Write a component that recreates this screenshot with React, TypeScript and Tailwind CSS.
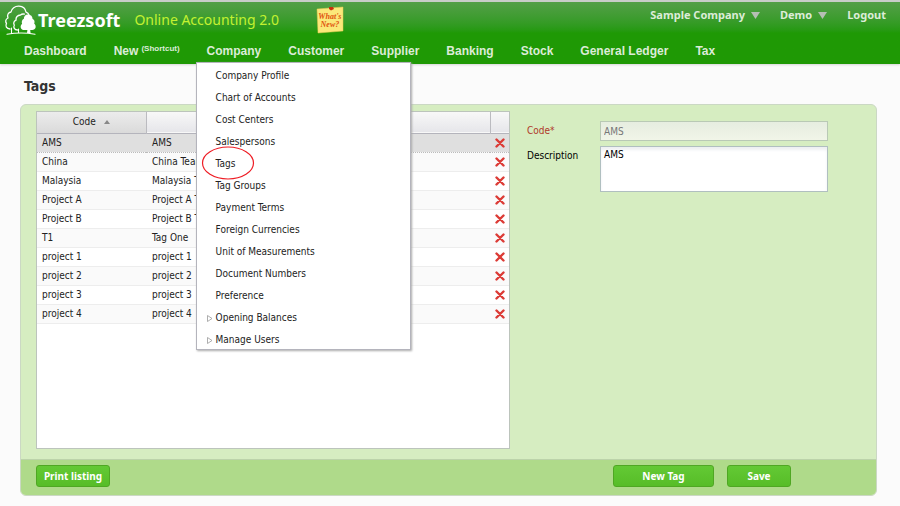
import { useState } from "react";

const navItems = [
  "Dashboard",
  "New",
  "Company",
  "Customer",
  "Supplier",
  "Banking",
  "Stock",
  "General Ledger",
  "Tax",
];

const companyMenu = [
  { label: "Company Profile" },
  { label: "Chart of Accounts" },
  { label: "Cost Centers" },
  { label: "Salespersons" },
  { label: "Tags", marked: true },
  { label: "Tag Groups" },
  { label: "Payment Terms" },
  { label: "Foreign Currencies" },
  { label: "Unit of Measurements" },
  { label: "Document Numbers" },
  { label: "Preference" },
  { label: "Opening Balances", hasChildren: true },
  { label: "Manage Users", hasChildren: true },
];

const initialTags = [
  { code: "AMS", description: "AMS" },
  { code: "China", description: "China Team" },
  { code: "Malaysia", description: "Malaysia Team" },
  { code: "Project A", description: "Project A Team" },
  { code: "Project B", description: "Project B Team" },
  { code: "T1", description: "Tag One" },
  { code: "project 1", description: "project 1" },
  { code: "project 2", description: "project 2" },
  { code: "project 3", description: "project 3" },
  { code: "project 4", description: "project 4" },
];

function TreeLogo() {
  return (
    <svg width="34" height="32" viewBox="4 3 34 32" fill="none" aria-hidden="true">
      <g stroke="#ffffff" strokeWidth="1.3" strokeLinecap="round" strokeLinejoin="round">
        {/* back tree */}
        <path d="M10 28c-3.500 0-5-3-3.500-5.500-1.500-2-.800-4.500 1.500-5.500-1.200-3 .300-5.500 3-6C11.500 7.500 15 5 19 5.200c4 .200 6.500 2.800 7 6 1.600.600 2.600 1.600 3 2.800" />
        {/* middle tree */}
        <path d="M17.500 29c-3 0-4.500-2.500-3.200-4.800-1.200-2-.400-4.200 1.700-5-.300-3 1.500-5 4.500-5.200 1-.900 2.500-1.200 4-.800" />
        <path d="M11.500 27v5M18.500 28v4M7 33.300c9-1.700 19-1.700 28 0" strokeWidth="1.100" />
      </g>
      {/* front tree */}
      <path
        d="M28 13.500c3 0 4.600 2.200 4.500 4.300 2 .900 2.500 3 1.700 4.700 2.600 2.500 1.700 6.500-2 6.500h-2l.400 3h-3.600l.400-3h-3c-3.800 0-5-3.800-2.300-6.300-.900-2 .100-4.200 1.800-4.900C23.700 15.500 25.300 13.500 28 13.500z"
        fill="#ffffff"
      />
    </svg>
  );
}

function WhatsNewNote() {
  return (
    <svg width="30" height="28" viewBox="0 0 30 28" aria-hidden="true">
      <path d="M2 3l26-2v24L3 27z" fill="#fbe87a" stroke="#e2c94d" strokeWidth="0.500" />
      <path d="M14 1l4 0 1 2-3 1.500-2-1.500z" fill="#c8310c" />
    </svg>
  );
}

function DeleteIcon() {
  return (
    <svg width="10" height="10" viewBox="0 0 10 10" aria-hidden="true">
      <path d="M1.500 1.500l7 7M8.500 1.500l-7 7" stroke="#dc3b36" strokeWidth="2.400" strokeLinecap="round" />
    </svg>
  );
}

function DownArrow() {
  return (
    <svg width="9" height="7" viewBox="0 0 9 7" aria-hidden="true">
      <path d="M0 0h9L4.500 7z" fill="#b5bfb3" />
    </svg>
  );
}

const greenButton =
  "h-[22px] rounded-[3px] border border-[#4fa723] bg-linear-to-b from-[#63c934] to-[#57bd28] font-['Noto_Sans',sans-serif] text-[10px] leading-4 font-bold text-white";

export default function App() {
  const [tags, setTags] = useState(initialTags);
  const [selected, setSelected] = useState("AMS");
  const [description, setDescription] = useState("AMS");

  const selectTag = (tag: { code: string; description: string }) => {
    setSelected(tag.code);
    setDescription(tag.description);
  };

  return (
    <div className="min-h-screen bg-[#fbfbfb] font-['DejaVu_Sans_Condensed','Noto_Sans',sans-serif] text-[10px] leading-4 text-[#222222]">
      {/* Header */}
      <header className="border-t-2 border-[#c9cdc9] bg-linear-to-b from-[#539f47] to-[#1f9905] to-50% font-['Noto_Sans',sans-serif] shadow-[0_1px_2px_#d5d5d5]">
        <div className="flex h-9 items-center justify-between pr-[14px] pl-1">
          <div className="flex items-center">
            <TreeLogo />
            <span className="text-[18px] font-bold text-white">Treezsoft</span>
            <span className="ml-[14px] text-[14px] text-[#c3f230]">Online Accounting 2.0</span>
            <a href="#whats-new" className="relative ml-9">
              <WhatsNewNote />
              <span className="absolute inset-x-0 top-[7px] text-center font-['Liberation_Serif',serif] text-[8px] leading-2 font-bold text-[#e0530e] italic">
                What's New?
              </span>
            </a>
          </div>
          <div className="flex items-center gap-5 pb-[10px] text-[11px] font-bold text-[#dcecd8]">
            <button className="flex items-center gap-[6px]">
              Sample Company <DownArrow />
            </button>
            <button className="flex items-center gap-[6px]">
              Demo <DownArrow />
            </button>
            <a href="#logout">Logout</a>
          </div>
        </div>

        {/* Main menu */}
        <nav>
          <ul className="flex h-[26px] items-center gap-[27px] pl-6 font-['Liberation_Sans',sans-serif] text-[12px] font-bold text-[#dcecd8]">
            {navItems.map((item) => (
              <li key={item} className="relative">
                <a href="#menu" className="whitespace-nowrap">
                  {item}
                  {item === "New" && <sup className="ml-[3px] text-[8px]">(Shortcut)</sup>}
                </a>
                {item === "Company" && (
                  <ul className="absolute top-[19px] -left-[11px] z-10 w-[215px] border border-[#b4b4bc] bg-white font-['DejaVu_Sans_Condensed','Noto_Sans',sans-serif] text-[10px] font-normal text-[#222222] shadow-[1px_1px_2px_#aaaaaa]">
                    {companyMenu.map((entry) => (
                      <li key={entry.label} className="relative flex h-[22px] items-center pt-1 pl-[19px]">
                        {entry.hasChildren && (
                          <svg className="absolute left-[10px]" width="6" height="7" viewBox="0 0 6 7" aria-hidden="true">
                            <path d="M.500.500L5 3.500.500 6.500z" fill="none" stroke="#999999" strokeWidth="0.800" />
                          </svg>
                        )}
                        <a href="#entry">{entry.label}</a>
                        {entry.marked && (
                          <svg className="absolute -top-[5px] left-1" width="54" height="34" viewBox="0 0 54 34" aria-hidden="true">
                            <ellipse cx="27" cy="17" rx="25.500" ry="16" fill="none" stroke="#ee1c24" strokeWidth="1.200" />
                          </svg>
                        )}
                      </li>
                    ))}
                  </ul>
                )}
              </li>
            ))}
          </ul>
        </nav>
      </header>

      <main className="pt-3 pr-[23px] pb-[9px] pl-5">
        <h1 className="pl-1 text-[14px] leading-5 font-bold text-[#333333]">Tags</h1>

        <div className="mt-2 overflow-hidden rounded-md border border-[#cbd8c4] bg-[#d6edc1]">
          <div className="grid grid-cols-[474fr_301fr] gap-[17px] pt-[6px] pr-12 pb-[10px] pl-[15px]">
            {/* Tag list */}
            <div className="min-h-[338px] border border-[#bcc4bc] bg-white">
              <table className="w-full table-fixed">
                <thead>
                  <tr className="h-[21px] border-b border-[#b4b4bc] bg-linear-to-b from-[#f8f8f8] to-[#e6e6ea]">
                    <th className="w-[109px] border-r border-[#bbbbc0] bg-linear-to-b from-[#ececec] to-[#dadada] font-normal">
                      <button className="inline-flex items-center gap-2 align-middle">
                        Code
                        <svg width="6" height="4" viewBox="0 0 6 4" aria-hidden="true">
                          <path d="M3 0l3 4H0z" fill="#888888" />
                        </svg>
                      </button>
                    </th>
                    <th className="border-r border-[#bbbbc0]" aria-label="Description" />
                    <th className="w-[19px]" aria-label="Delete" />
                  </tr>
                </thead>
                <tbody>
                  {tags.map((tag) => (
                    <tr
                      key={tag.code}
                      onClick={() => selectTag(tag)}
                      className={`h-[19px] border-b ${
                        selected === tag.code
                          ? "border-dotted border-[#bbbbbb] bg-[#dfdfdf]"
                          : "border-[#ededed] odd:bg-white even:bg-[#fafafa]"
                      }`}
                    >
                      <td className="pl-[5px]">{tag.code}</td>
                      <td className="pl-[6px]">{tag.description}</td>
                      <td>
                        <button
                          aria-label={`Delete ${tag.code}`}
                          onClick={() => setTags(tags.filter((t) => t.code !== tag.code))}
                          className="flex w-full justify-center"
                        >
                          <DeleteIcon />
                        </button>
                      </td>
                    </tr>
                  ))}
                </tbody>
              </table>
            </div>

            {/* Tag details */}
            <form className="grid grid-cols-[73px_1fr] content-start gap-y-[5px] pt-[10px]">
              <label htmlFor="code" className="pt-[2px] text-[#b03a2a]">
                Code*
              </label>
              <input
                id="code"
                value={selected}
                disabled
                className="h-5 border border-[#b9c9b5] bg-linear-to-b from-[#e6ede0] to-[#f1f5e8] px-[3px] text-[#777777]"
              />
              <label htmlFor="description" className="pt-[2px] text-black">
                Description
              </label>
              <textarea
                id="description"
                value={description}
                onChange={(e) => setDescription(e.target.value)}
                className="h-[46px] resize-none border border-[#b0bfc0] bg-white px-[3px] text-black shadow-[inset_0_3px_3px_#eef0f2]"
              />
            </form>
          </div>

          {/* Actions */}
          <div className="flex items-center border-t border-[#bcd3aa] bg-[#afda8a] pt-[5px] pr-[85px] pb-2 pl-[15px]">
            <button className={`${greenButton} w-[74px]`}>Print listing</button>
            <button className={`${greenButton} ml-auto w-[101px]`}>New Tag</button>
            <button className={`${greenButton} ml-[13px] w-16`}>Save</button>
          </div>
        </div>
      </main>
    </div>
  );
}
